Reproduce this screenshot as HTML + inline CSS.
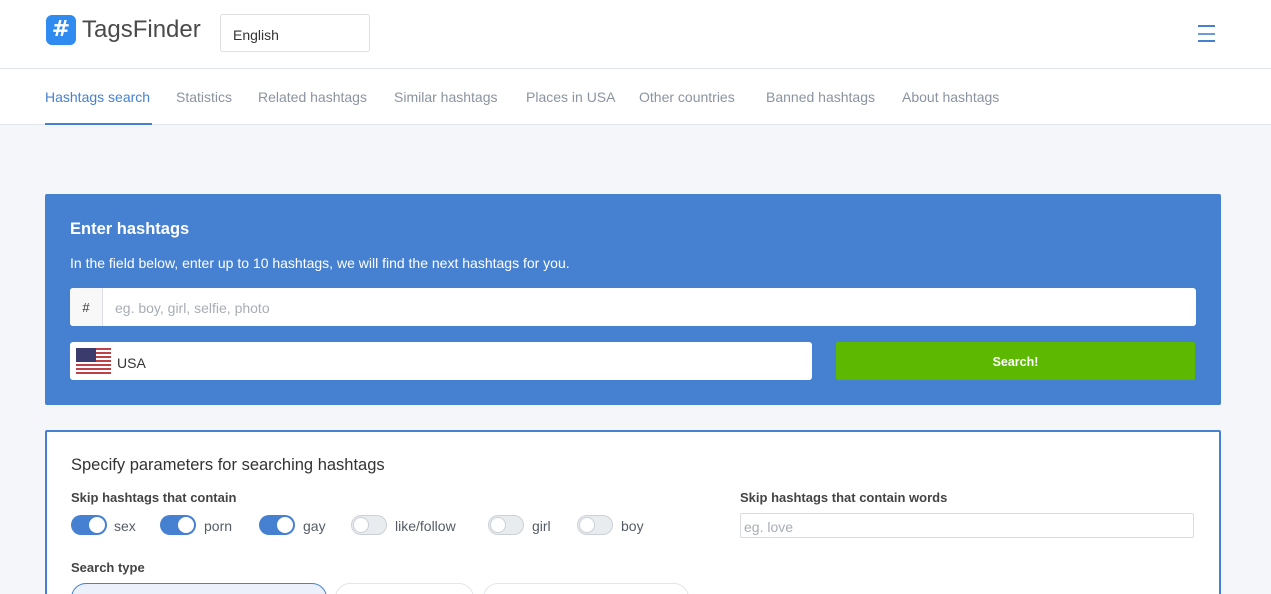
<!DOCTYPE html>
<html><head><meta charset="utf-8"><style>
*{box-sizing:border-box;margin:0;padding:0}
html,body{width:1271px;height:594px;overflow:hidden}
body{background:#f5f6fa;font-family:"Liberation Sans",sans-serif;position:relative}
.a{position:absolute}
.hdr{left:0;top:0;width:1271px;height:69px;background:#fff;border-bottom:1px solid #dfe3ea}
.nav{left:0;top:69px;width:1271px;height:56px;background:#fff;border-bottom:1px solid #e2e5ec}
.nav span{position:absolute;top:20px;font-size:14px;color:#8b93a1}
.tog{position:absolute;top:515px;width:36px;height:20px;border-radius:10px}
.tog.on{background:#4680d0}
.tog.off{background:#e9ecef;border:1px solid #ccd1d7}
.tog i{position:absolute;top:2px;width:16px;height:16px;border-radius:50%;background:#fff}
.tog.on i{right:2px}
.tog.off i{left:1px;top:1px;border:1px solid #ccd1d7;width:16px;height:16px}
.tl{position:absolute;top:518px;font-size:14px;color:#555c66}
</style></head><body>
<div class="a hdr"></div>
<div class="a" style="left:46px;top:15px;width:30px;height:30px;background:#2f8bf0;border-radius:6px;color:#fff;font-weight:bold;font-size:22px;text-align:center;line-height:30px;font-family:'DejaVu Sans',sans-serif">#</div>
<div class="a" style="left:82px;top:16px;font-size:24px;color:#4a4a4a">TagsFinder</div>
<div class="a" style="left:220px;top:14px;width:150px;height:38px;border:1px solid #dcdfe4;border-radius:3px;background:#fff;font-size:14px;color:#333;padding:12px 12px">English</div>
<div class="a" style="left:1198px;top:25px;width:17px;height:2px;background:#4680d0"></div>
<div class="a" style="left:1198px;top:33px;width:17px;height:2px;background:#6f9ad8"></div>
<div class="a" style="left:1198px;top:40px;width:17px;height:2px;background:#4680d0"></div>
<div class="a nav">
<span style="left:45px;color:#4680d0">Hashtags search</span>
<span style="left:176px">Statistics</span>
<span style="left:258px">Related hashtags</span>
<span style="left:394px">Similar hashtags</span>
<span style="left:526px">Places in USA</span>
<span style="left:639px">Other countries</span>
<span style="left:766px">Banned hashtags</span>
<span style="left:902px">About hashtags</span>
<div style="position:absolute;left:45px;top:54px;width:107px;height:2px;background:#4680d0"></div>
</div>
<div class="a" style="left:45px;top:194px;width:1176px;height:211px;background:#4680d0;border-radius:2px"></div>
<div class="a" style="left:70px;top:220px;color:#fff;font-weight:bold;font-size:16.5px">Enter hashtags</div>
<div class="a" style="left:70px;top:255px;color:#fff;font-size:14px">In the field below, enter up to 10 hashtags, we will find the next hashtags for you.</div>
<div class="a" style="left:70px;top:288px;width:1126px;height:38px;background:#fff;border-radius:3px"></div>
<div class="a" style="left:70px;top:288px;width:33px;height:38px;background:#f8f8f8;border-right:1px solid #dde;border-radius:3px 0 0 3px;text-align:center;line-height:40px;font-size:13px;color:#333">#</div>
<div class="a" style="left:115px;top:300px;font-size:14px;color:#a8adb5">eg. boy, girl, selfie, photo</div>
<div class="a" style="left:70px;top:342px;width:742px;height:38px;background:#fff;border-radius:3px"></div>
<svg class="a" style="left:76px;top:348px" width="35" height="26" viewBox="0 0 35 26"><rect width="35" height="26" fill="#fff"/><g fill="#c0404a"><rect y="0" width="35" height="2"/><rect y="4" width="35" height="2"/><rect y="8" width="35" height="2"/><rect y="12" width="35" height="2"/><rect y="16" width="35" height="2"/><rect y="20" width="35" height="2"/><rect y="24" width="35" height="2"/></g><rect width="20" height="14" fill="#3c3b6e"/></svg>
<div class="a" style="left:117px;top:355px;font-size:14px;color:#333">USA</div>
<div class="a" style="left:836px;top:342px;width:359px;height:38px;background:#5cb800;border-radius:2px;color:#fff;font-weight:bold;font-size:12.5px;text-align:center;line-height:40px">Search!</div>
<div class="a" style="left:45px;top:430px;width:1176px;height:200px;background:#fff;border:2px solid #4680d0;border-radius:2px"></div>
<div class="a" style="left:71px;top:456px;font-size:16.5px;color:#333">Specify parameters for searching hashtags</div>
<div class="a" style="left:71px;top:490px;font-size:13px;font-weight:bold;color:#444">Skip hashtags that contain</div>
<div class="a" style="left:740px;top:490px;font-size:13px;font-weight:bold;color:#444">Skip hashtags that contain words</div>
<div class="a" style="left:740px;top:513px;width:454px;height:25px;border:1px solid #d8dce2;border-radius:2px;font-size:14px;color:#a8adb5;padding:5px 3px">eg. love</div>
<div class="tog on" style="left:71px"><i></i></div><span class="tl" style="left:114px">sex</span>
<div class="tog on" style="left:160px"><i></i></div><span class="tl" style="left:204px">porn</span>
<div class="tog on" style="left:259px"><i></i></div><span class="tl" style="left:303px">gay</span>
<div class="tog off" style="left:351px"><i></i></div><span class="tl" style="left:395px">like/follow</span>
<div class="tog off" style="left:488px"><i></i></div><span class="tl" style="left:532px">girl</span>
<div class="tog off" style="left:577px"><i></i></div><span class="tl" style="left:621px">boy</span>
<div class="a" style="left:71px;top:560px;font-size:13px;font-weight:bold;color:#444">Search type</div>
<div class="a" style="left:71px;top:583px;width:256px;height:30px;border:1px solid #4680d0;border-radius:15px;background:#ebf0fa"></div>
<div class="a" style="left:335px;top:583px;width:139px;height:30px;border:1px solid #e3e6ea;border-radius:15px;background:#fff"></div>
<div class="a" style="left:483px;top:583px;width:206px;height:30px;border:1px solid #e3e6ea;border-radius:15px;background:#fff"></div>
</body></html>
